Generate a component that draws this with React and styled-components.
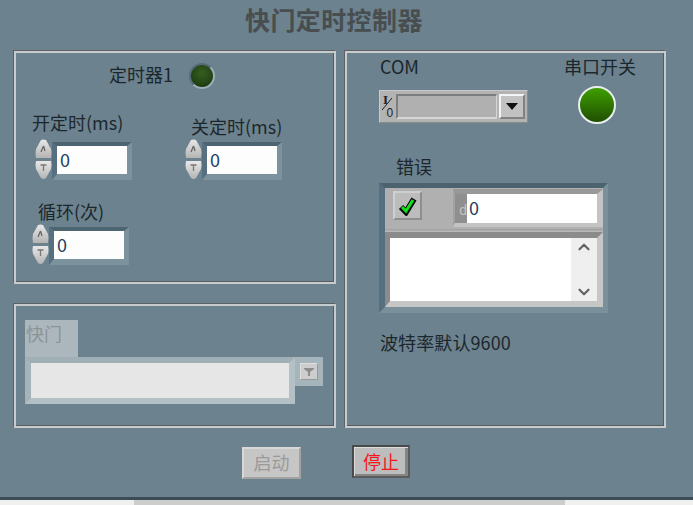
import React from 'react';
import styled, { createGlobalStyle } from 'styled-components';
import { ChevronUp, ChevronDown } from 'lucide-react';

const GlobalStyle = createGlobalStyle`
  html, body {
    margin: 0;
    padding: 0;
    background: #6c828e;
  }
`;

const Page = styled.div`
  width: 693px;
  height: 505px;
  overflow: hidden;
  display: flex;
  flex-direction: column;
  background: #6c828e;
  color: #1c272d;
  font-family: "Noto Sans CJK SC", "Noto Sans", sans-serif;
  font-size: 18px;
`;

const Title = styled.h1`
  margin: 0;
  height: 51px;
  padding: 0 0 13px 245px;
  box-sizing: border-box;
  display: flex;
  align-items: center;
  font-size: 25px;
  font-weight: 700;
  letter-spacing: 0.4px;
  color: #484d50;
`;

const Columns = styled.div`
  display: grid;
  grid-template-columns: 322px 321px;
  column-gap: 9px;
  padding-left: 14px;
`;

const LeftColumn = styled.div`
  display: flex;
  flex-direction: column;
  gap: 20px;
`;

const Panel = styled.section`
  box-sizing: border-box;
  height: ${(p) => p.$height}px;
  border: 2px solid #c8cbcc;
  box-shadow: -1px -1px 0 #5c6164, inset -1px -1px 0 #565b5e;
`;

const Label = styled.label`
  display: block;
  line-height: 20px;
  height: 20px;
  white-space: nowrap;
  margin-left: ${(p) => p.$indent || 0}px;
  margin-bottom: ${(p) => p.$gap || 0}px;
`;

const LedRow = styled.div`
  display: flex;
  align-items: center;
  gap: 16px;
  padding: 10px 0 0 93px;
`;

const LedLabel = styled.span`
  line-height: 20px;
  margin-bottom: 4px;
`;

const SmallLed = styled.div`
  width: 26px;
  height: 26px;
  border-radius: 50%;
  box-sizing: border-box;
  border: 2px solid #566c78;
  border-right-color: #9cafb8;
  border-bottom-color: #9cafb8;
  background: radial-gradient(circle at 50% 38%, #365e20 0%, #264716 55%, #14290a 100%);
`;

const ControlRow = styled.div`
  display: grid;
  grid-template-columns: 153px auto;
  align-items: end;
  justify-items: start;
  padding-left: 16px;
  margin-top: ${(p) => p.$top}px;
`;

const NumericWrap = styled.div`
  display: flex;
  margin-left: ${(p) => p.$indent || 0}px;
`;

const NumericBox = styled.div`
  box-sizing: border-box;
  width: 80px;
  height: 38px;
  margin-top: 3px;
  border-style: solid;
  border-width: 4px 5px 6px 5px;
  border-color: #4d6471 #7c929d #7c929d #577080;
`;

const NumericValue = styled.div`
  height: 100%;
  background: #fdfdfd;
  color: #23405f;
  line-height: 27px;
  padding-left: 3px;
`;

const Spinner = () => (
  <svg width="17" height="41" viewBox="0 0 17 41">
    <defs>
      <linearGradient id="spin" x1="0" y1="0" x2="0" y2="1">
        <stop offset="0" stopColor="#e8e8e8" />
        <stop offset="1" stopColor="#b4b4b4" />
      </linearGradient>
    </defs>
    <path d="M6 1 Q8.5 0 11 1 L16 10 Q17 14 16 19 H1 Q0 14 1 10 Z" fill="url(#spin)" />
    <path d="M1 22 H16 Q17 26 16 30 L11 39 Q8.5 41 6 39 L1 30 Q0 26 1 22 Z" fill="url(#spin)" />
    <path d="M8.5 7 L6 13 M8.5 7 L10 12" stroke="#666" strokeWidth="1.3" fill="none" />
    <path d="M5.5 26 H11.5 M8.5 26 V32" stroke="#777" strokeWidth="1.3" fill="none" />
  </svg>
);

const Numeric = ({ indent }) => (
  <NumericWrap $indent={indent}>
    <Spinner />
    <NumericBox>
      <NumericValue>0</NumericValue>
    </NumericBox>
  </NumericWrap>
);

const Tab = styled.div`
  box-sizing: border-box;
  width: 53px;
  height: 37px;
  margin: 14px 0 0 9px;
  padding: 3px 0 0 1px;
  background: #abb7bc;
  color: #8b9398;
  line-height: 20px;
`;

const TabRow = styled.div`
  display: flex;
  align-items: flex-start;
  margin-left: 9px;
`;

const TabBody = styled.div`
  box-sizing: border-box;
  width: 270px;
  height: 47px;
  border-style: solid;
  border-width: 6px;
  border-color: #9fafb5 #b3c0c5 #b3c0c5 #a5b4ba;
  background: #e6e6e6;
`;

const TabSide = styled.div`
  box-sizing: border-box;
  width: 28px;
  height: 29px;
  padding: 6px 5px;
  background: #a6b5bb;
`;

const GhostArrow = styled.div`
  box-sizing: border-box;
  width: 18px;
  height: 17px;
  display: flex;
  align-items: center;
  justify-content: center;
  background: #cdcdcd;
  border: 1px solid #9a9a9a;
  border-top-color: #dedede;
  border-left-color: #dedede;
  color: #8c8c8c;
`;

const TopRow = styled.div`
  display: grid;
  grid-template-columns: 185px 72px;
  padding: 3px 0 0 32px;
`;

const Stack = styled.div`
  display: flex;
  flex-direction: column;
  align-items: flex-start;
`;

const Dropdown = styled.div`
  box-sizing: border-box;
  width: 149px;
  height: 33px;
  margin-top: 14px;
  display: flex;
  align-items: stretch;
  padding: 3px 2px 3px 2px;
  background: #b3b3b3;
  border: 1px solid #8a8a8a;
  border-top-color: #c9c9c9;
  border-left-color: #c9c9c9;
`;

const DropdownValue = styled.div`
  flex: 1;
  margin: 0 2px 0 0;
  box-sizing: border-box;
  background: #b0b0b0;
  border-style: solid;
  border-width: 2px 1px 2px 2px;
  border-color: #7d7d7d #d6d6d6 #d6d6d6 #7d7d7d;
`;

const DropdownButton = styled.div`
  box-sizing: border-box;
  width: 26px;
  display: flex;
  align-items: center;
  justify-content: center;
  background: #c2c2c2;
  border-style: solid;
  border-width: 2px;
  border-color: #f4f4f4 #828282 #828282 #f4f4f4;
`;

const BigLed = styled.div`
  box-sizing: border-box;
  width: 38px;
  height: 38px;
  margin: 10px 0 0 14px;
  border-radius: 50%;
  border: 2px solid #e9eeee;
  background: linear-gradient(#3f9e00, #1f4f00);
`;

const ErrorLabelRow = styled.div`
  margin: 32px 0 7px 32px;
`;

const Cluster = styled.div`
  box-sizing: border-box;
  width: 229px;
  height: 130px;
  margin-left: 32px;
  border-style: solid;
  border-width: 5px 5px 6px 6px;
  border-color: #4c626e #7a909b #7a909b #577080;
  background: #b0b0b0;
`;

const ClusterTop = styled.div`
  display: flex;
  align-items: flex-start;
  height: 41px;
`;

const CheckButton = styled.div`
  box-sizing: border-box;
  width: 29px;
  height: 29px;
  margin: 3px 0 0 8px;
  display: flex;
  align-items: center;
  justify-content: center;
  background: #bcbcbc;
  border-style: solid;
  border-width: 2px;
  border-color: #cfcfcf #8e8e8e #8e8e8e #cfcfcf;
`;

const CodeField = styled.div`
  box-sizing: border-box;
  width: 150px;
  height: 38px;
  margin: 1px 0 0 31px;
  display: flex;
  border-style: solid;
  border-width: 5px 6px 4px 2px;
  border-color: #989898 #c4c4c4 #c4c4c4 #a2a2a2;
`;

const CodeRadix = styled.div`
  width: 12px;
  background: #8f8f8f;
  color: #c2c2c2;
  font-family: "Liberation Sans", sans-serif;
  font-size: 14px;
  line-height: 33px;
  text-align: right;
`;

const CodeValue = styled.div`
  flex: 1;
  background: #fff;
  color: #23405f;
  line-height: 27px;
  padding-left: 2px;
`;

const Divider = styled.div`
  height: 3px;
  background: linear-gradient(#9d9d9d, #bdbdbd);
`;

const SourceBox = styled.div`
  box-sizing: border-box;
  height: 75px;
  display: flex;
  border-style: solid;
  border-width: 6px 6px 6px 5px;
  border-color: #8b8b8b #c6c6c6 #c6c6c6 #8b8b8b;
  background: #fff;
`;

const SourceText = styled.div`
  flex: 1;
`;

const ScrollBar = styled.div`
  width: 26px;
  display: flex;
  flex-direction: column;
  justify-content: space-between;
  align-items: center;
  background: #efefef;
  color: #646464;
`;

const Note = styled.div`
  margin: 19px 0 0 33px;
  line-height: 20px;
  letter-spacing: 0.1px;
`;

const Footer = styled.div`
  display: flex;
  align-items: flex-start;
  gap: 51px;
  padding: 17px 0 0 242px;
`;

const Button = styled.button`
  box-sizing: border-box;
  padding: 0 0 2px;
  font: inherit;
  line-height: 1;
  width: ${(p) => (p.$stop ? 58 : 59)}px;
  height: ${(p) => (p.$stop ? 33 : 32)}px;
  margin-top: ${(p) => (p.$stop ? 0 : 2)}px;
  color: ${(p) => (p.$stop ? '#f8141c' : '#9a9a9a')};
  background: ${(p) => (p.$stop ? '#bdbdbd' : '#c6c6c6')};
  border-style: solid;
  border-width: 2px;
  border-color: ${(p) =>
    p.$stop ? '#4a4a4a #5c5c5c #5c5c5c #4a4a4a' : '#d8d8d8 #a2a2a2 #a2a2a2 #d8d8d8'};
  box-shadow: ${(p) =>
    p.$stop ? 'inset 1px 1px 0 #dcdcdc, inset -3px -2px 0 #858585' : 'none'};
`;

const BottomEdge = styled.div`
  margin-top: auto;
  height: 3px;
  background: #3d4b57;
`;

const WindowScroll = styled.div`
  height: 5px;
  padding-left: 134px;
  background: #f0f0f0;
`;

const WindowThumb = styled.div`
  width: 431px;
  height: 100%;
  background: #cdcdcd;
`;

const App = () => {
  return (
    <Page>
      <GlobalStyle />
      <Title>快门定时控制器</Title>
      <Columns>
        <LeftColumn>
          <Panel $height={233}>
            <LedRow>
              <LedLabel>定时器1</LedLabel>
              <SmallLed />
            </LedRow>
            <ControlRow $top={23}>
              <div>
                <Label $gap={7}>开定时(ms)</Label>
                <Numeric indent={3} />
              </div>
              <div>
                <Label $indent={6} $gap={3}>关定时(ms)</Label>
                <Numeric />
              </div>
            </ControlRow>
            <ControlRow $top={21}>
              <div>
                <Label $indent={6} $gap={3}>循环(次)</Label>
                <Numeric />
              </div>
            </ControlRow>
          </Panel>
          <Panel $height={124}>
            <Tab>快门</Tab>
            <TabRow>
              <TabBody />
              <TabSide>
                <GhostArrow>
                  <svg width="10" height="8" viewBox="0 0 10 8">
                    <path d="M0 0 H10 V1 L6 4 V8 H4 V4 L0 1 Z" fill="currentColor" />
                  </svg>
                </GhostArrow>
              </TabSide>
            </TabRow>
          </Panel>
        </LeftColumn>
        <Panel $height={377}>
          <TopRow>
            <Stack>
              <Label $indent={1}>COM</Label>
              <Dropdown>
                <svg width="14" height="25" viewBox="0 0 14 25" overflow="visible">
                  <text x="1" y="10" fontFamily="Liberation Serif, serif" fontSize="13" fontWeight="700" fill="#222">I</text>
                  <path d="M0 16 L10 4" stroke="#222" strokeWidth="1" />
                  <text x="4.5" y="23" fontFamily="Liberation Sans, sans-serif" fontSize="12" fill="#222">0</text>
                </svg>
                <DropdownValue />
                <DropdownButton>
                  <svg width="12" height="7" viewBox="0 0 12 7">
                    <path d="M0 0 H12 L6 7 Z" fill="#111" />
                  </svg>
                </DropdownButton>
              </Dropdown>
            </Stack>
            <Stack>
              <Label>串口开关</Label>
              <BigLed />
            </Stack>
          </TopRow>
          <ErrorLabelRow>
            <Label $indent={17}>错误</Label>
          </ErrorLabelRow>
          <Cluster>
            <ClusterTop>
              <CheckButton>
                <svg width="20" height="20" viewBox="0 0 20 20">
                  <path d="M3 11 L8 16 L16 3" stroke="#0b0b0b" strokeWidth="6" fill="none" />
                  <path d="M4 11 L8 15 L15 4" stroke="#12e01c" strokeWidth="3" fill="none" />
                </svg>
              </CheckButton>
              <CodeField>
                <CodeRadix>d</CodeRadix>
                <CodeValue>0</CodeValue>
              </CodeField>
            </ClusterTop>
            <Divider />
            <SourceBox>
              <SourceText />
              <ScrollBar>
                <ChevronUp size={18} strokeWidth={3} />
                <ChevronDown size={18} strokeWidth={3} />
              </ScrollBar>
            </SourceBox>
          </Cluster>
          <Note>波特率默认9600</Note>
        </Panel>
      </Columns>
      <Footer>
        <Button>启动</Button>
        <Button $stop>停止</Button>
      </Footer>
      <BottomEdge />
      <WindowScroll>
        <WindowThumb />
      </WindowScroll>
    </Page>
  );
};

export default App;
